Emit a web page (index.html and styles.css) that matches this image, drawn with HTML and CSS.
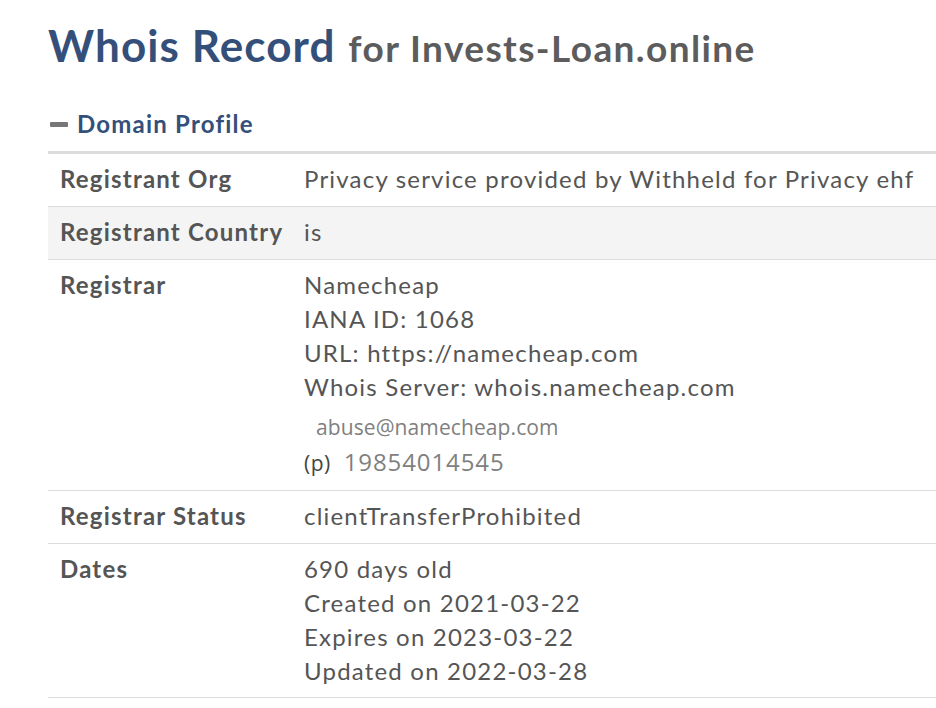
FILE: index.html
```html
<!DOCTYPE html>
<html>
<head>
<meta charset="utf-8">
<link rel="stylesheet" href="styles.css">
</head>
<body>
<div class="page">
  <h1 class="title"><span class="title-main">Whois Record</span> <span class="title-sub">for Invests-Loan.online</span></h1>
  <h2 class="section"><span class="minus"></span>Domain Profile</h2>
  <div class="table">
    <div class="row">
      <div class="label">Registrant Org</div>
      <div class="value">Privacy service provided by Withheld for Privacy ehf</div>
    </div>
    <div class="row alt">
      <div class="label">Registrant Country</div>
      <div class="value">is</div>
    </div>
    <div class="row">
      <div class="label">Registrar</div>
      <div class="value">
        <div>Namecheap</div>
        <div>IANA ID: 1068</div>
        <div>URL: https://namecheap.com</div>
        <div>Whois Server: whois.namecheap.com</div>
        <div class="email">abuse@namecheap.com</div>
        <div class="phone"><span class="p">(p)</span><span class="num">19854014545</span></div>
      </div>
    </div>
    <div class="row">
      <div class="label">Registrar Status</div>
      <div class="value">clientTransferProhibited</div>
    </div>
    <div class="row dates">
      <div class="label">Dates</div>
      <div class="value">
        <div>690 days old</div>
        <div>Created on 2021-03-22</div>
        <div>Expires on 2023-03-22</div>
        <div>Updated on 2022-03-28</div>
      </div>
    </div>
  </div>
</div>
</body>
</html>
```

FILE: styles.css
```css
html, body {
  margin: 0;
  padding: 0;
  background: #fff;
}
body {
  font-family: Lato, "Open Sans", sans-serif;
  color: #555;
  overflow: hidden;
}
.page {
  padding-left: 48px;
}
.title {
  margin: 0;
  padding-top: 17px;
  font-size: 44px;
  font-weight: 700;
  line-height: 56px;
  white-space: nowrap;
}
.title-main {
  font-size: 44px;
  color: #34507a;
  letter-spacing: 1.1px;
}
.title-sub {
  font-size: 37px;
  color: #5c5c5c;
  letter-spacing: 1.4px;
  margin-left: 2px;
}
.section {
  margin: 35px 0 0 0;
  font-size: 24px;
  font-weight: 700;
  color: #34507a;
  line-height: 26px;
  display: flex;
  align-items: center;
  letter-spacing: 1.2px;
}
.minus {
  display: inline-block;
  width: 18px;
  height: 5px;
  background: #777;
  border-radius: 1px;
  margin: 0 9px 0 2px;
}
.table {
  margin-top: 14px;
  border-top: 3px solid #dcdcdc;
  width: 900px;
}
.row {
  display: grid;
  grid-template-columns: 244px 1fr;
  border-bottom: 1px solid #dcdcdc;
  padding: 8px 12px 10px 12px;
  font-size: 24px;
  line-height: 34px;
  letter-spacing: 1.2px;
}
.row.dates {
  padding-bottom: 9px;
}
.row.alt {
  background: #f4f4f4;
}
.label {
  font-weight: 700;
  color: #555;
}
.value {
  color: #555;
}
.email {
  font-family: "Open Sans", "Noto Sans", sans-serif;
  font-size: 21px;
  letter-spacing: 0.1px;
  color: #808080;
  padding-left: 12px;
  line-height: 36px;
  margin-top: 5px;
}
.phone {
  display: flex;
  align-items: baseline;
  font-family: "Open Sans", "Noto Sans", sans-serif;
  letter-spacing: 0;
  line-height: 34px;
}
.phone .p {
  font-size: 21px;
  letter-spacing: 0.5px;
  color: #444;
}
.phone .num {
  font-size: 24px;
  letter-spacing: 0.9px;
  color: #808080;
  margin-left: 13px;
}
```
